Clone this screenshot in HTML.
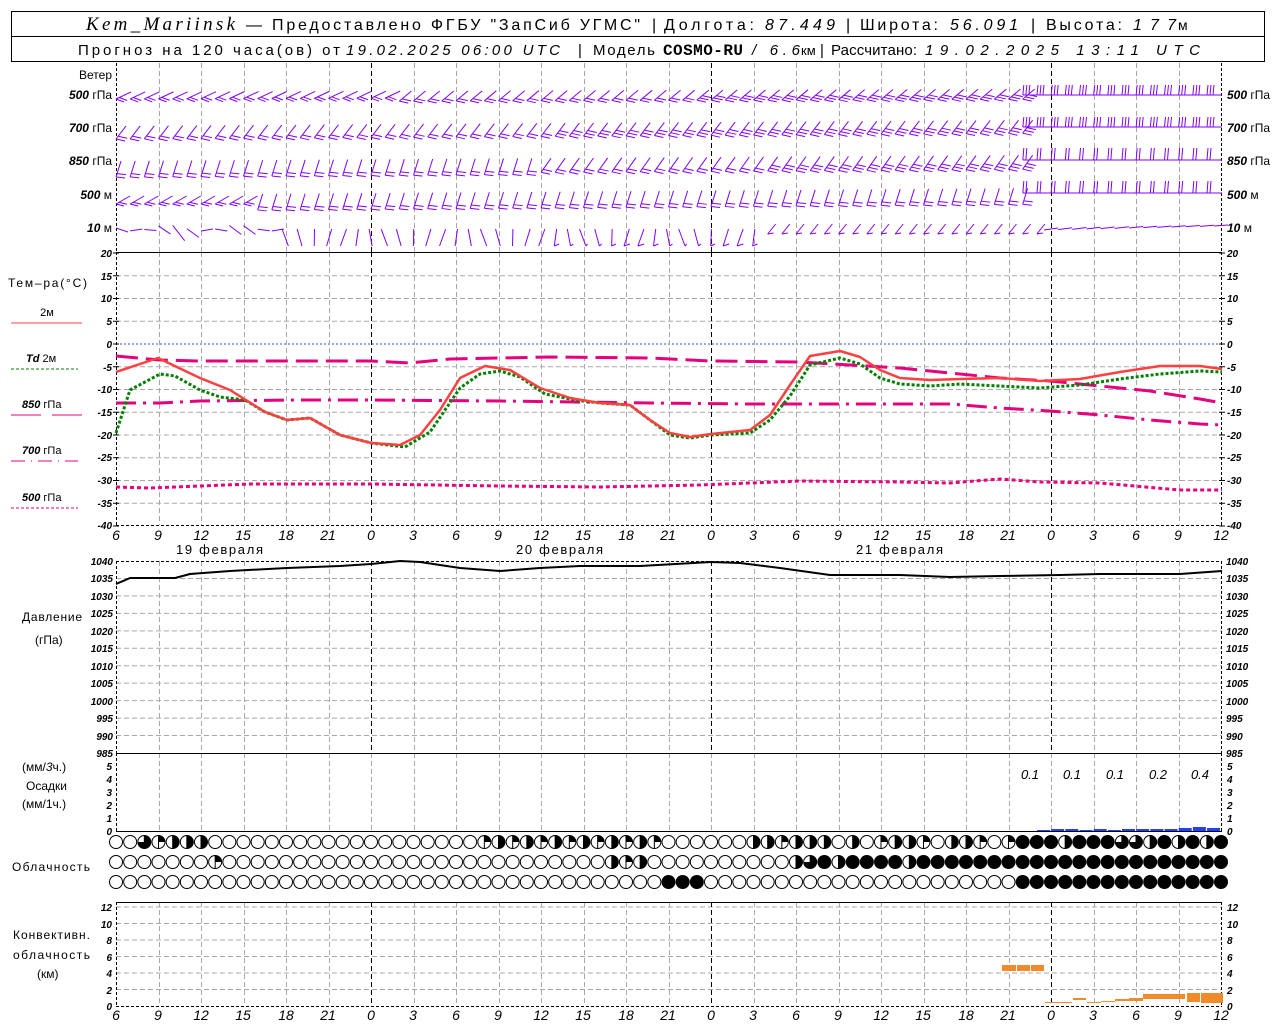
<!DOCTYPE html>
<html><head><meta charset="utf-8">
<style>
html,body{margin:0;padding:0;background:#fff;}
svg{display:block;}
text{font-family:"Liberation Sans",sans-serif;fill:#000;}
.ax{font-size:10px;font-style:italic;font-weight:bold;}
.lb{font-size:12px;}
.xl{font-size:14px;font-style:italic;}
.it{font-style:italic;}
</style></head>
<body>
<svg id="s" width="1280" height="1024" viewBox="0 0 1280 1024" xmlns="http://www.w3.org/2000/svg">
<rect x="11.5" y="11.5" width="1253" height="50" fill="none" stroke="#000"/>
<line x1="11" y1="36.5" x2="1265" y2="36.5" stroke="#000"/>
<g font-size="16">
<text x="86" y="30" style="font-family:'Liberation Serif',serif;font-style:italic;font-size:19px" textLength="149">Kem_Mariinsk</text>
<text x="246" y="30" textLength="394">— Предоставлено ФГБУ "ЗапСиб УГМС"</text>
<text x="652" y="30">|</text>
<text x="664" y="30" textLength="90">Долгота:</text>
<text x="765" y="30" font-style="italic" textLength="70">87.449</text>
<text x="846" y="30">|</text>
<text x="860" y="30" textLength="78">Широта:</text>
<text x="950" y="30" font-style="italic" textLength="68">56.091</text>
<text x="1031" y="30">|</text>
<text x="1046" y="30" textLength="76">Высота:</text>
<text x="1133" y="30" font-style="italic" textLength="43">177</text>
<text x="1178" y="30" font-size="14">м</text>
</g>
<g font-size="15">
<text x="78" y="55" textLength="262">Прогноз на 120 часа(ов) от</text>
<text x="346" y="55" font-style="italic" textLength="214">19.02.2025 06:00 UTC</text>
<text x="578" y="55">|</text>
<text x="593" y="55" textLength="62">Модель</text>
<text x="663" y="55" style="font-family:'Liberation Mono',monospace;font-weight:bold;font-size:16px" textLength="80">COSMO-RU</text>
<text x="752" y="55" font-style="italic" textLength="48">/ 6.6</text>
<text x="801" y="55" font-size="13">км</text>
<text x="820" y="55">|</text>
<text x="831" y="55" textLength="86">Рассчитано:</text>
<text x="925" y="55" font-style="italic" textLength="275">19.02.2025 13:11 UTC</text>
</g>
<g id="grid"></g>
<g id="data"></g>
<g class="lb" font-size="11">
<text x="112" y="79" text-anchor="end">Ветер</text>
<text x="112" y="99" text-anchor="end"><tspan class="it" font-weight="bold">500</tspan> гПа</text>
<text x="112" y="132" text-anchor="end"><tspan class="it" font-weight="bold">700</tspan> гПа</text>
<text x="112" y="165" text-anchor="end"><tspan class="it" font-weight="bold">850</tspan> гПа</text>
<text x="112" y="199" text-anchor="end"><tspan class="it" font-weight="bold">500</tspan>  м</text>
<text x="112" y="232" text-anchor="end"><tspan class="it" font-weight="bold">10</tspan>    м</text>
<text x="1227" y="99"><tspan class="it" font-weight="bold">500</tspan> гПа</text>
<text x="1227" y="132"><tspan class="it" font-weight="bold">700</tspan> гПа</text>
<text x="1227" y="165"><tspan class="it" font-weight="bold">850</tspan> гПа</text>
<text x="1227" y="199"><tspan class="it" font-weight="bold">500</tspan>  м</text>
<text x="1227" y="232"><tspan class="it" font-weight="bold">10</tspan>    м</text>
</g>
<g class="lb">
<text x="8" y="287" textLength="79">Тем–ра(°C)</text>
<text x="47" y="316" text-anchor="middle" font-size="11">2м</text>
<line x1="11" y1="323" x2="82" y2="323" stroke="#ff4040"/>
<text x="26" y="362" font-size="11"><tspan class="it" font-weight="bold">Td</tspan>  2м</text>
<line x1="11" y1="369" x2="78" y2="369" stroke="#008000" stroke-dasharray="3,2"/>
<text x="22" y="408" font-size="11"><tspan class="it" font-weight="bold">850</tspan> гПа</text>
<line x1="11" y1="415" x2="41" y2="415" stroke="#e6007e"/><line x1="52" y1="415" x2="82" y2="415" stroke="#e6007e"/>
<text x="22" y="454" font-size="11"><tspan class="it" font-weight="bold">700</tspan> гПа</text>
<line x1="11" y1="461" x2="78" y2="461" stroke="#e6007e" stroke-dasharray="14,6,1,6"/>
<text x="22" y="501" font-size="11"><tspan class="it" font-weight="bold">500</tspan> гПа</text>
<line x1="11" y1="508" x2="78" y2="508" stroke="#e6007e" stroke-dasharray="3,2"/>
</g>
<g class="ax" text-anchor="end">
<text x="112" y="257">20</text><text x="112" y="280">15</text><text x="112" y="302">10</text><text x="112" y="325">5</text><text x="112" y="348">0</text><text x="112" y="371">-5</text><text x="112" y="393">-10</text><text x="112" y="416">-15</text><text x="112" y="439">-20</text><text x="112" y="461">-25</text><text x="112" y="484">-30</text><text x="112" y="507">-35</text><text x="112" y="529">-40</text>
</g>
<g class="ax">
<text x="1227" y="257">20</text><text x="1227" y="280">15</text><text x="1227" y="302">10</text><text x="1227" y="325">5</text><text x="1227" y="348">0</text><text x="1227" y="371">-5</text><text x="1227" y="393">-10</text><text x="1227" y="416">-15</text><text x="1227" y="439">-20</text><text x="1227" y="461">-25</text><text x="1227" y="484">-30</text><text x="1227" y="507">-35</text><text x="1227" y="529">-40</text>
</g>
<g class="xl" text-anchor="middle">
<text x="116" y="540">6</text><text x="158" y="540">9</text><text x="201" y="540">12</text><text x="243" y="540">15</text><text x="286" y="540">18</text><text x="328" y="540">21</text><text x="371" y="540">0</text><text x="413" y="540">3</text><text x="456" y="540">6</text><text x="498" y="540">9</text><text x="541" y="540">12</text><text x="583" y="540">15</text><text x="626" y="540">18</text><text x="668" y="540">21</text><text x="711" y="540">0</text><text x="753" y="540">3</text><text x="796" y="540">6</text><text x="838" y="540">9</text><text x="881" y="540">12</text><text x="923" y="540">15</text><text x="966" y="540">18</text><text x="1008" y="540">21</text><text x="1051" y="540">0</text><text x="1093" y="540">3</text><text x="1136" y="540">6</text><text x="1178" y="540">9</text><text x="1221" y="540">12</text>
</g>
<g font-size="13">
<text x="176" y="554" textLength="87">19 февраля</text>
<text x="516" y="554" textLength="87">20 февраля</text>
<text x="856" y="554" textLength="87">21 февраля</text>
</g>
<g class="lb"><text x="22" y="621" textLength="60">Давление</text><text x="35" y="644">(гПа)</text></g>
<g class="ax" text-anchor="end" font-size="9">
<text x="113" y="565">1040</text><text x="113" y="582">1035</text><text x="113" y="600">1030</text><text x="113" y="617">1025</text><text x="113" y="635">1020</text><text x="113" y="652">1015</text><text x="113" y="670">1010</text><text x="113" y="687">1005</text><text x="113" y="705">1000</text><text x="113" y="722">995</text><text x="113" y="740">990</text><text x="113" y="757">985</text>
</g>
<g class="ax" font-size="9">
<text x="1226" y="565">1040</text><text x="1226" y="582">1035</text><text x="1226" y="600">1030</text><text x="1226" y="617">1025</text><text x="1226" y="635">1020</text><text x="1226" y="652">1015</text><text x="1226" y="670">1010</text><text x="1226" y="687">1005</text><text x="1226" y="705">1000</text><text x="1226" y="722">995</text><text x="1226" y="740">990</text><text x="1226" y="757">985</text>
</g>
<g class="lb"><text x="22" y="771">(мм/<tspan class="it">3</tspan>ч.)</text><text x="26" y="790">Осадки</text><text x="22" y="808">(мм/1ч.)</text></g>
<g class="ax" text-anchor="end"><text x="112" y="770">5</text><text x="112" y="783">4</text><text x="112" y="796">3</text><text x="112" y="809">2</text><text x="112" y="822">1</text><text x="112" y="835">0</text></g>
<g class="ax"><text x="1227" y="770">5</text><text x="1227" y="783">4</text><text x="1227" y="796">3</text><text x="1227" y="809">2</text><text x="1227" y="822">1</text><text x="1227" y="835">0</text></g>
<g font-size="13" font-style="italic" text-anchor="middle"><text x="1030" y="779">0.1</text><text x="1072" y="779">0.1</text><text x="1115" y="779">0.1</text><text x="1158" y="779">0.2</text><text x="1200" y="779">0.4</text></g>
<text class="lb" x="12" y="871" textLength="78">Облачность</text>
<g class="lb"><text x="13" y="939" textLength="77">Конвективн.</text><text x="13" y="959" textLength="77">облачность</text><text x="37" y="978">(км)</text></g>
<g class="ax" text-anchor="end"><text x="112" y="911">12</text><text x="112" y="928">10</text><text x="112" y="944">8</text><text x="112" y="961">6</text><text x="112" y="977">4</text><text x="112" y="994">2</text><text x="112" y="1010">0</text></g>
<g class="ax"><text x="1227" y="911">12</text><text x="1227" y="928">10</text><text x="1227" y="944">8</text><text x="1227" y="961">6</text><text x="1227" y="977">4</text><text x="1227" y="994">2</text><text x="1227" y="1010">0</text></g>
<g class="xl" text-anchor="middle">
<text x="116" y="1020">6</text><text x="158" y="1020">9</text><text x="201" y="1020">12</text><text x="243" y="1020">15</text><text x="286" y="1020">18</text><text x="328" y="1020">21</text><text x="371" y="1020">0</text><text x="413" y="1020">3</text><text x="456" y="1020">6</text><text x="498" y="1020">9</text><text x="541" y="1020">12</text><text x="583" y="1020">15</text><text x="626" y="1020">18</text><text x="668" y="1020">21</text><text x="711" y="1020">0</text><text x="753" y="1020">3</text><text x="796" y="1020">6</text><text x="838" y="1020">9</text><text x="881" y="1020">12</text><text x="923" y="1020">15</text><text x="966" y="1020">18</text><text x="1008" y="1020">21</text><text x="1051" y="1020">0</text><text x="1093" y="1020">3</text><text x="1136" y="1020">6</text><text x="1178" y="1020">9</text><text x="1221" y="1020">12</text>
</g>
</svg>
<script>
(function(){
var NS="http://www.w3.org/2000/svg";
var G=document.getElementById('grid'),D=document.getElementById('data');
function el(p,n,a){var e=document.createElementNS(NS,n);for(var k in a)e.setAttribute(k,a[k]);p.appendChild(e);return e;}
function X(h){return 116+h*340/24;}
function ln(p,x1,y1,x2,y2,c,da,w){var a={x1:x1,y1:y1,x2:x2,y2:y2,stroke:c,'stroke-width':w||1};if(da)a['stroke-dasharray']=da;return el(p,'line',a);}
var GR='#a8a8a8',DA='5,3';
for(var t=15;t>=-35;t-=5){var y=344-t*4.55;if(t==0)ln(G,116,y,1222,y,'#3050ff','2,2');else ln(G,116,y,1222,y,GR,DA);}
for(var p=1035;p>985;p-=5){var y=561+(1040-p)*192/55;ln(G,116,y,1222,y,GR,DA);}
for(var k=2;k<=12;k+=2){var y=1006-k*8.25;ln(G,116,y,1222,y,GR,DA);}
for(var h=3;h<78;h+=3){var x=Math.round(X(h))+.5;var mid=((h+6)%24==0);var c=mid?'#000':GR;
ln(G,x,63,x,252,c,DA);ln(G,x,252,x,525,c,DA);ln(G,x,561,x,753,c,DA);ln(G,x,753,x,831,GR,DA);ln(G,x,902,x,1006,c,DA);}
[116.5,1221.5].forEach(function(x){ln(G,x,63,x,252,'#000','3,2');ln(G,x,252,x,525,'#000','3,2');ln(G,x,561,x,753,'#000','3,2');ln(G,x,753,x,831,'#000','3,2');ln(G,x,902,x,1006,'#000','3,2');});
ln(G,116,252.5,1222,252.5,'#000');ln(G,116,525.5,1222,525.5,'#000','3,2');ln(G,116,561.5,1222,561.5,'#000','3,2');
ln(G,116,753.5,1222,753.5,'#000');ln(G,116,831.5,1222,831.5,'#000');ln(G,116,902.5,1222,902.5,'#000');ln(G,116,1006.5,1222,1006.5,'#000','3,2');
var ty=[];for(var t=20;t>=-40;t-=5)ty.push(344-t*4.55);ty.forEach(function(y){ln(G,113,y,119,y,'#000');ln(G,1219,y,1225,y,'#000');});
function poly(pts,c,w,da){var s=pts.map(function(p){return p[0]+','+p[1];}).join(' ');var a={points:s,fill:'none',stroke:c,'stroke-width':w,'stroke-linejoin':'round'};if(da)a['stroke-dasharray']=da;el(D,'polyline',a);}
poly([[116,356],[160,360],[200,361],[300,361],[371,361],[410,363],[450,359],[550,357],[650,358],[711,361],[800,362],[850,365],[900,368],[950,373],[1000,378],[1050,381],[1100,386],[1150,391],[1200,399],[1222,403]],'#e6007e',3,'22,8');
poly([[116,403],[160,403],[200,401],[300,400],[371,400],[500,401],[650,403],[750,404],[850,404],[950,404],[1000,408],[1050,411],[1100,415],[1150,420],[1200,424],[1222,425]],'#e6007e',3,'20,7,3,7');
poly([[116,487],[150,488],[250,484],[300,484],[371,484],[500,486],[600,487],[700,485],[800,481],[900,482],[950,483],[1000,479],[1040,482],[1100,483],[1180,490],[1222,490]],'#e6007e',3,'4,3');
poly([[116,433],[130,390],[160,374],[175,376],[200,390],[220,397],[245,400],[265,412],[287,420],[310,418],[340,435],[371,443],[405,447],[430,432],[460,388],[480,374],[500,371],[520,377],[545,394],[575,400],[600,403],[630,405],[650,420],[670,435],[690,438],[711,435],[750,433],[770,420],[790,396],[810,365],[840,358],[860,364],[880,378],[900,384],[930,386],[960,384],[1000,386],[1040,388],[1080,385],[1120,379],[1160,374],[1200,371],[1222,372]],'#008000',3,'3,2');
poly([[116,372],[158,358],[200,378],[230,390],[265,412],[287,420],[310,418],[340,435],[371,443],[400,445],[420,435],[440,410],[460,378],[485,366],[510,370],[540,388],[570,398],[600,403],[630,405],[650,420],[670,433],[690,437],[711,434],[750,430],[770,415],[790,385],[810,356],[840,351],[860,357],[880,370],[900,378],[930,380],[960,379],[1000,378],[1040,381],[1080,379],[1120,372],[1160,366],[1200,366],[1222,369]],'#ff4040',2.5);
poly([[116,584],[130,578],[175,578],[190,574],[230,571],[287,568],[340,566],[371,564],[400,561],[420,562],[460,568],[500,571],[540,568],[580,566],[640,566],[711,562],[740,563],[780,568],[830,575],[860,575],[900,575],[950,577],[1000,576],[1060,575],[1100,574],[1180,574],[1222,571]],'#000',2);
var PC='#8000ff';
// tail at x (axis side), staff rises to station at upper-right
function barb(x,y,dx,dy,n,fx,fy){var sx=x-dx;var tx=x,ty=y+dy;ln(D,sx,y,tx,ty,PC);var L=Math.sqrt(dx*dx+dy*dy),ux=-dx/L,uy=-dy/L;
for(var i=0;i<n;i++){var bx=tx+ux*i*3.5,by=ty+uy*i*3.5;ln(D,bx,by,bx+fx,by+fy,PC);}}
function lerp(a,b,f){return a+(b-a)*f;}
for(var h=0;h<=78;h++){var x=X(h),f=Math.min(1,h/66);
 if(h>=65){
  [[95,3,10],[127,3,10],[160,2,12],[193,2,12]].forEach(function(v){var y=v[0];ln(D,x-14,y,x+1,y,PC);for(var i=0;i<v[1];i++)ln(D,x-14+i*3,y,x-13+i*3,y-v[2],PC);});
 } else {
  var y0=lerp(92,89,f);
  if(h<20)barb(x,y0,-15,7,2,8,3);else barb(x,y0,-12,10,h>40?3:2,9,2);
  barb(x,lerp(126,120,f),-10,13,h>30?3:2,9,2);
  if(h<30)barb(x,lerp(161,155,f),-5,16,2,9,1);else barb(x,lerp(161,155,f),-10,14,h>45?3:2,9,2);
  if(h<10)barb(x,196,-14,8,2,8,2);else barb(x,lerp(195,188,f),-5,16,2,9,1);
 }
 if(h<12){var s=Math.sin(h*1.3);ln(D,x,228+s*3,x+12,232-s*3+(h>3&&h<6?6:0),PC);}
 else if(h<46){var s=Math.sin(h*0.9)*4;ln(D,x+s,229,x-s*0.6,246,PC);if(h>30)ln(D,x-s*0.6,246,x+4,244,PC);}
 else if(h<66){barb(x,224,-8,10,1,6,-1);}
 else {ln(D,x-7,lerp(230,226,(h-66)/12),x+7,lerp(228,225,(h-66)/12),PC);}
}
var rows=["0031222"+"0".repeat(19)+"1212121212121"+"000000"+"2212220201221022101"+"444244433242424",
"0000000"+"1"+"0".repeat(27)+"212"+"0".repeat(10)+"2342"+"444424444444444444444444444",
"0".repeat(39)+"444"+"0".repeat(22)+"4".repeat(15)];
var cy=[842,862,882];
for(var R=0;R<3;R++)for(var h=0;h<=78;h++){var x=X(h),y=cy[R],q=+rows[R][h],r=6.5;
if(q==4){el(D,'circle',{cx:x,cy:y,r:r+0.5,fill:'#000'});continue;}
el(D,'circle',{cx:x,cy:y,r:r,fill:'#fff',stroke:'#000','stroke-width':1});
if(q==1)el(D,'path',{d:'M'+x+','+y+' L'+x+','+(y-r)+' A'+r+','+r+' 0 0,1 '+(x+r)+','+y+' Z',fill:'#000'});
if(q==2)el(D,'path',{d:'M'+x+','+(y-r)+' A'+r+','+r+' 0 0,1 '+x+','+(y+r)+' Z',fill:'#000'});
if(q==3)el(D,'path',{d:'M'+x+','+y+' L'+x+','+(y-r)+' A'+r+','+r+' 0 1,1 '+(x-r)+','+y+' Z',fill:'#000'});
if(q>0)ln(D,x,y-r,x,y+r,'#000');}
var pv=[1,2,2,1,2,1,2,2,2,2,3,4,3];
for(var i=0;i<13;i++){var x=1037+i*14.17;el(D,'rect',{x:x,y:831-pv[i],width:13,height:pv[i],fill:'#2040ff'});}
var OC='#f08a2a';
[[1002,965,14,6],[1017,965,13,6],[1031,965,13,6],[1045,1002,27,1],[1073,998,13,2],[1087,1002,14,1],[1101,1001,14,1],[1115,999,14,2],[1129,998,14,3],[1143,994,42,5],[1187,993,13,9],[1201,993,22,10]].forEach(function(b){el(D,'rect',{x:b[0],y:b[1],width:b[2],height:b[3],fill:OC});});
})();
</script>
</body></html>
